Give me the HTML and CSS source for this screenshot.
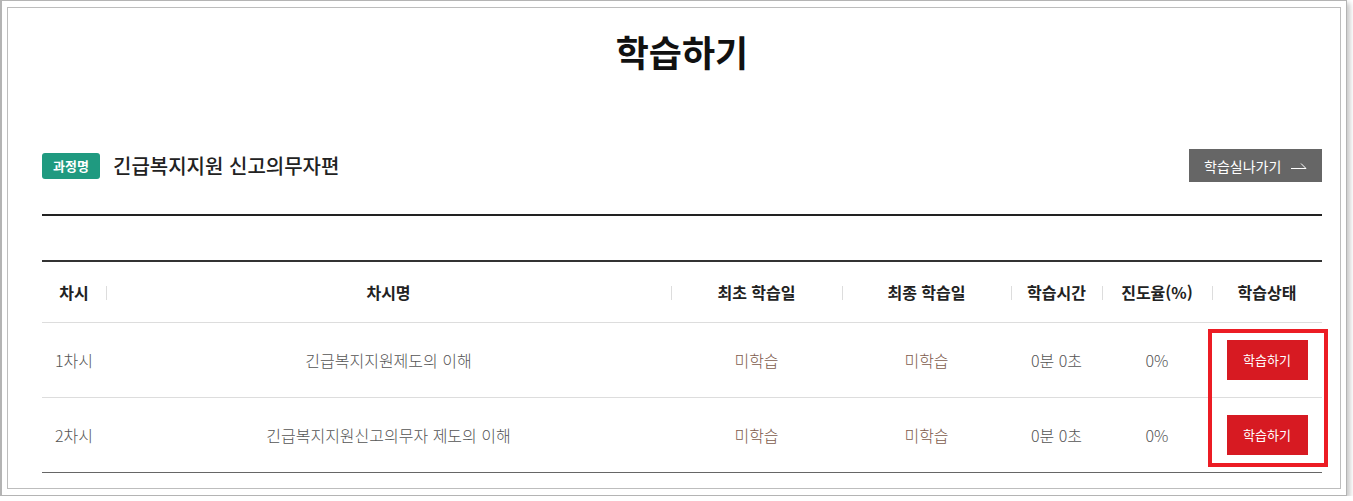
FILE: index.html
```html
<!DOCTYPE html>
<html lang="ko">
<head>
    <meta charset="utf-8">
    <title>학습하기</title>
    <link rel="stylesheet" href="styles.css">
</head>
<body>
    <div class="frame">
        <div class="popup">
            <h1 class="title">학습하기</h1>

            <div class="course-head">
                <div class="course-name">
                    <span class="badge">과정명</span>
                    <strong>긴급복지지원 신고의무자편</strong>
                </div>
                <button class="btn-exit">학습실나가기
                    <svg width="16" height="7" viewBox="0 0 16 7"><path d="M0 6.5H15L10 1.5" fill="none" stroke="#fff" stroke-width="1"/></svg>
                </button>
            </div>

            <table class="lesson-table">
                <colgroup>
                    <col style="width:64px">
                    <col style="width:565px">
                    <col style="width:171px">
                    <col style="width:169px">
                    <col style="width:91px">
                    <col style="width:110px">
                    <col style="width:110px">
                </colgroup>
                <thead>
                    <tr>
                        <th>차시</th>
                        <th>차시명</th>
                        <th>최초 학습일</th>
                        <th>최종 학습일</th>
                        <th>학습시간</th>
                        <th>진도율(%)</th>
                        <th>학습상태</th>
                    </tr>
                </thead>
                <tbody>
                    <tr>
                        <td>1차시</td>
                        <td>긴급복지지원제도의 이해</td>
                        <td class="state">미학습</td>
                        <td class="state">미학습</td>
                        <td>0분 0초</td>
                        <td>0%</td>
                        <td><button class="btn-study">학습하기</button></td>
                    </tr>
                    <tr>
                        <td>2차시</td>
                        <td>긴급복지지원신고의무자 제도의 이해</td>
                        <td class="state">미학습</td>
                        <td class="state">미학습</td>
                        <td>0분 0초</td>
                        <td>0%</td>
                        <td><button class="btn-study">학습하기</button></td>
                    </tr>
                </tbody>
            </table>
        </div>

        <div class="highlight"></div>
    </div>
</body>
</html>
```

FILE: styles.css
```css
* {
    box-sizing: border-box;
}

body {
    margin: 0;
    padding: 0;
    background: #fff;
    font-family: "Noto Sans CJK KR", "Noto Sans", sans-serif;
    color: #333;
}

.frame {
    position: relative;
    width: 1347px;
    height: 496px;
    padding: 6px 5px 6px 5px;
    border: 1px solid #b4b4b4;
    border-left-width: 2px;
    background: #fff;
    box-shadow: 3px 3px 5px rgba(0,0,0,0.22);
}

.popup {
    height: 482px;
    padding: 0 18px 0 34px;
    border: 1px solid #bdbdbd;
    overflow: hidden;
}

.title {
    margin: 0;
    padding-top: 21px;
    height: 65px;
    line-height: 44px;
    font-size: 36px;
    font-weight: bold;
    text-align: center;
    color: #111;
}

.course-head {
    display: flex;
    justify-content: space-between;
    align-items: center;
    margin-top: 76px;
    padding-bottom: 32px;
    border-bottom: 2px solid #222;
}

.course-name {
    display: flex;
    align-items: center;
    gap: 13px;
}

.course-name strong {
    font-size: 20px;
    font-weight: 500;
    color: #222;
}

.badge {
    display: inline-block;
    width: 58px;
    height: 26px;
    line-height: 26px;
    border-radius: 3px;
    background-color: #1f9a80;
    color: #fff;
    font-size: 13px;
    font-weight: bold;
    text-align: center;
}

.btn-exit {
    display: flex;
    align-items: center;
    gap: 10px;
    width: 133px;
    height: 33px;
    padding: 0 0 0 15px;
    border: none;
    background-color: #666;
    color: #fff;
    font-family: inherit;
    font-size: 14px;
    cursor: pointer;
}

.lesson-table {
    width: 1280px;
    margin-top: 44px;
    border-collapse: collapse;
    table-layout: fixed;
    border-top: 2px solid #333;
}

.lesson-table th {
    position: relative;
    height: 61px;
    padding: 0;
    border-bottom: 1px solid #ddd;
    font-size: 16px;
    font-weight: bold;
    color: #222;
    text-align: center;
}

.lesson-table th + th::before {
    content: "";
    position: absolute;
    left: 0;
    top: 24px;
    width: 1px;
    height: 14px;
    background: #ddd;
}

.lesson-table td {
    height: 75px;
    padding: 0;
    border-bottom: 1px solid #ddd;
    font-size: 16px;
    font-weight: 300;
    color: #555;
    text-align: center;
}

.lesson-table tbody tr:last-child td {
    border-bottom-color: #666;
}

.lesson-table td.state {
    color: #7d5b4b;
}

.btn-study {
    width: 81px;
    height: 40px;
    border: none;
    background-color: #d71a22;
    color: #fff;
    font-family: inherit;
    font-size: 13px;
    cursor: pointer;
}

.highlight {
    position: absolute;
    left: 1206px;
    top: 328px;
    width: 120px;
    height: 138px;
    border: 4px solid #ec1c24;
}
```
